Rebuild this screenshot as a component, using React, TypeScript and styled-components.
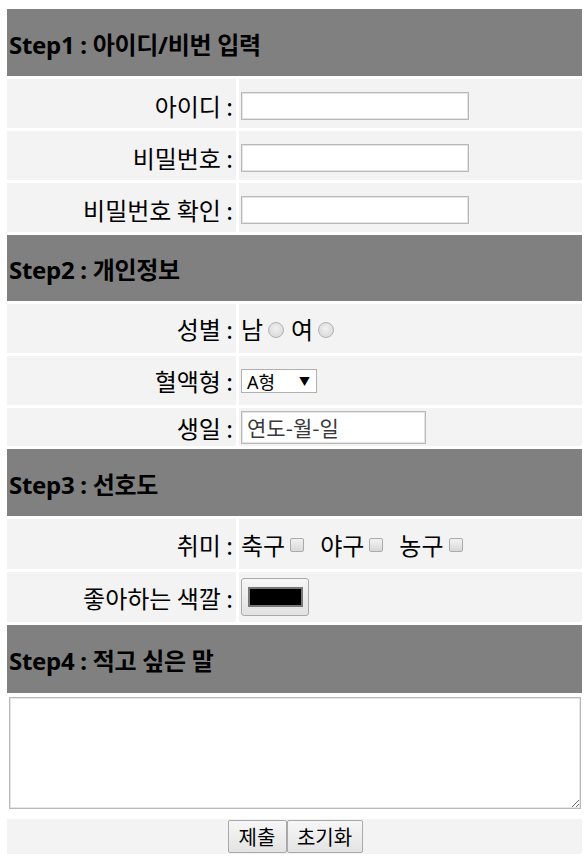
import React from "react";
import styled, { createGlobalStyle } from "styled-components";

const Global = createGlobalStyle`
  html, body { margin: 0; padding: 0; background: #ffffff; }
  body { font-family: "Noto Sans", "Noto Sans CJK KR", sans-serif; color: #000; }
  * { box-sizing: border-box; }
`;

const Form = styled.form`
  width: 575px;
  margin: 9px 0 0 7px;
  display: grid;
  grid-template-columns: 229px 343px;
  gap: 3px;
`;

const Header = styled.div<{ $h: number }>`
  grid-column: 1 / 3;
  height: ${(p) => p.$h}px;
  background: #808080;
  display: flex;
  align-items: center;
  padding: 1px 0 0 2px;
  font-family: "Noto Sans", "Noto Sans CJK KR", sans-serif;
  font-weight: 700;
  font-size: 24px;
  letter-spacing: -0.3px;
`;

const Label = styled.div<{ $h: number; $pt?: number }>`
  height: ${(p) => p.$h}px;
  background: #f3f3f3;
  display: flex;
  align-items: center;
  justify-content: flex-end;
  padding: ${(p) => p.$pt ?? 0}px 3px 0 0;
  font-family: "Noto Sans CJK KR", "Noto Sans", sans-serif;
  font-size: 24px;
  white-space: pre;
`;

const Value = styled.div<{ $h: number; $pt?: number }>`
  height: ${(p) => p.$h}px;
  background: #f3f3f3;
  display: flex;
  align-items: center;
  padding: ${(p) => p.$pt ?? 0}px 0 0 2px;
  font-family: "Noto Sans CJK KR", "Noto Sans", sans-serif;
  font-size: 24px;
`;

const TextInput = styled.input<{ $w: number; $ht: number }>`
  width: ${(p) => p.$w}px;
  height: ${(p) => p.$ht}px;
  border: 1px solid #b9b9b9;
  box-shadow: inset 0 0 0 1px #e4e4e4;
  background: #fff;
  margin: 0;
  padding: 0 5px;
  font-family: "Noto Sans CJK KR", "Noto Sans", sans-serif;
  font-size: 21px;
  color: #333;
  outline: none;
  &::placeholder { color: #3a3a3a; }
`;

const Choice = styled.span<{ $gap?: number }>`
  display: inline-flex;
  align-items: center;
  margin-right: ${(p) => p.$gap ?? 0}px;
`;

const Radio = styled.input.attrs({ type: "radio" })`
  appearance: none;
  width: 16px;
  height: 16px;
  margin: 2px 7px 0 5px;
  border-radius: 50%;
  border: 1px solid #b2b2b2;
  background: radial-gradient(circle at 50% 40%, #f0f0f0 0%, #d4d4d4 100%);
`;

const Check = styled.input.attrs({ type: "checkbox" })`
  appearance: none;
  width: 14px;
  height: 14px;
  margin: 2px 0 0 5px;
  border-radius: 2px;
  border: 1px solid #aaaaaa;
  background: linear-gradient(#f2f2f2, #d8d8d8);
`;

const SelectWrap = styled.span`
  position: relative;
  display: inline-flex;
`;

const Select = styled.select`
  appearance: none;
  width: 76px;
  height: 24px;
  margin: 0;
  border: 1px solid #b0b0b0;
  background: #fff;
  padding: 0 0 0 5px;
  font-family: "Noto Sans", "Noto Sans CJK KR", sans-serif;
  font-size: 18px;
  color: #000;
`;

const Arrow = styled.span`
  position: absolute;
  right: 7px;
  top: 4px;
  font-size: 11px;
  pointer-events: none;
`;

const ColorButton = styled.button`
  width: 68px;
  height: 38px;
  margin: 0;
  border: 1px solid #a9a9a9;
  border-radius: 3px;
  background: linear-gradient(#f6f6f6, #e2e2e2);
  display: flex;
  align-items: center;
  justify-content: center;
  padding: 0;
`;

const Swatch = styled.span`
  width: 55px;
  height: 20px;
  background: #000;
  border: 2px solid #777;
`;

const AreaCell = styled.div`
  grid-column: 1 / 3;
  padding: 1px 1px 7px 2px;
`;

const TextArea = styled.textarea`
  display: block;
  width: 572px;
  height: 112px;
  border: 1px solid #b9b9b9;
  box-shadow: inset 0 0 0 1px #e6e6e6;
  resize: both;
  margin: 0;
`;

const ButtonRow = styled.div`
  grid-column: 1 / 3;
  height: 35px;
  background: #f3f3f3;
  display: flex;
  justify-content: center;
  align-items: center;
  padding-left: 1px;
`;

const Btn = styled.button<{ $w: number }>`
  width: ${(p) => p.$w}px;
  height: 33px;
  margin: 0;
  border: 1px solid #a9a9a9;
  border-radius: 2px;
  background: linear-gradient(#f7f7f7, #e3e3e3);
  font-family: "Noto Sans CJK KR", "Noto Sans", sans-serif;
  font-size: 20px;
  color: #000;
  padding: 0;
`;

export default function App() {
  return (
    <>
      <Global />
      <Form onSubmit={(e) => e.preventDefault()}>
        <Header $h={67}>Step1 : 아이디/비번 입력</Header>
        <Label $h={49} $pt={4}>아이디 :</Label>
        <Value $h={49} $pt={4}><TextInput $w={228} $ht={28} /></Value>
        <Label $h={49} $pt={4}>비밀번호 :</Label>
        <Value $h={49} $pt={4}><TextInput $w={228} $ht={28} type="password" /></Value>
        <Label $h={49} $pt={4}>비밀번호 확인 :</Label>
        <Value $h={49} $pt={4}><TextInput $w={228} $ht={28} type="password" /></Value>

        <Header $h={66}>Step2 : 개인정보</Header>
        <Label $h={49}>성별 :</Label>
        <Value $h={49}>
          <Choice>남<Radio name="g" /></Choice>
          <Choice>여<Radio name="g" /></Choice>
        </Value>
        <Label $h={49}>혈액형 :</Label>
        <Value $h={49}>
          <SelectWrap>
            <Select defaultValue="A">
              <option value="A">A형</option>
              <option value="B">B형</option>
              <option value="O">O형</option>
              <option value="AB">AB형</option>
            </Select>
            <Arrow>▼</Arrow>
          </SelectWrap>
        </Value>
        <Label $h={38}>생일 :</Label>
        <Value $h={38}><TextInput $w={185} $ht={33} placeholder="연도-월-일" /></Value>

        <Header $h={67}>Step3 : 선호도</Header>
        <Label $h={50}>취미 :</Label>
        <Value $h={50}>
          <Choice $gap={16}>축구<Check /></Choice>
          <Choice $gap={16}>야구<Check /></Choice>
          <Choice>농구<Check /></Choice>
        </Value>
        <Label $h={50}>좋아하는 색깔 :</Label>
        <Value $h={50}>
          <ColorButton type="button"><Swatch /></ColorButton>
        </Value>

        <Header $h={68}>Step4 : 적고 싶은 말</Header>
        <AreaCell><TextArea /></AreaCell>
        <ButtonRow>
          <Btn $w={59} type="submit">제출</Btn>
          <Btn $w={76} type="reset">초기화</Btn>
        </ButtonRow>
      </Form>
    </>
  );
}
